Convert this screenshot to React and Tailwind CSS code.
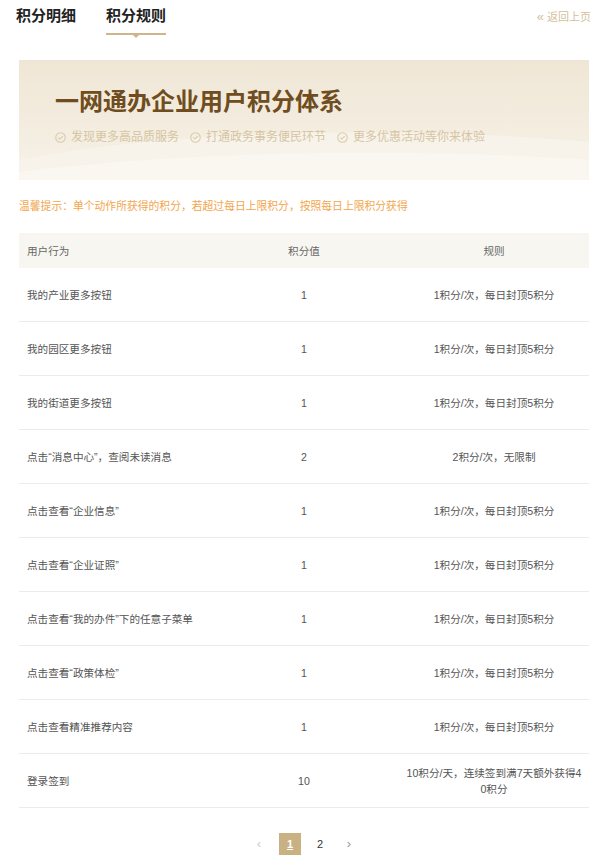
import React from "react";

const rows = [
  ["我的产业更多按钮", "1", "1积分/次，每日封顶5积分"],
  ["我的园区更多按钮", "1", "1积分/次，每日封顶5积分"],
  ["我的街道更多按钮", "1", "1积分/次，每日封顶5积分"],
  ["点击“消息中心”，查阅未读消息", "2", "2积分/次，无限制"],
  ["点击查看“企业信息”", "1", "1积分/次，每日封顶5积分"],
  ["点击查看“企业证照”", "1", "1积分/次，每日封顶5积分"],
  ["点击查看“我的办件”下的任意子菜单", "1", "1积分/次，每日封顶5积分"],
  ["点击查看“政策体检”", "1", "1积分/次，每日封顶5积分"],
  ["点击查看精准推荐内容", "1", "1积分/次，每日封顶5积分"],
  ["登录签到", "10", "10积分/天，连续签到满7天额外获得40积分"],
];

function Check() {
  return (
    <svg width="11" height="11" viewBox="0 0 12 12" fill="none" stroke="#d9c9a8" strokeWidth="1.1">
      <circle cx="6" cy="6" r="5.2" />
      <path d="M3.6 6.1l1.7 1.7 3.1-3.2" />
    </svg>
  );
}

export default function App() {
  return (
    <div className="w-[608px] h-[859px] bg-white overflow-hidden" style={{ fontFamily: '"Liberation Sans", "Noto Sans CJK SC", sans-serif' }}>
      {/* tabs */}
      <div className="flex items-start h-[60px] pl-[16px] pr-[17px]">
        <div className="pt-[5px] text-[15px] font-bold text-[#222] leading-[22px]">积分明细</div>
        <div className="ml-[30px] pt-[5px] flex flex-col items-center">
          <div className="text-[15px] font-bold text-[#222] leading-[22px]">积分规则</div>
          <div className="relative mt-[6px] w-[60px] h-[2px] bg-[#cdb68c]">
            <div className="absolute left-[27px] top-[2px] w-0 h-0 border-l-[3px] border-r-[3px] border-t-[3px] border-l-transparent border-r-transparent border-t-[#cdb68c]" />
          </div>
        </div>
        <div className="ml-auto pt-[9px] flex items-center gap-[3px] text-[11px] text-[#d2bf9b] leading-[16px]">
          <span className="text-[13px]">«</span>
          <span>返回上页</span>
        </div>
      </div>

      {/* banner */}
      <div className="relative mx-[19px] h-[120px] overflow-hidden bg-gradient-to-b from-[#efe6d5] to-[#f7f2e8]">
        <svg className="absolute left-0 bottom-0" width="572" height="60" viewBox="0 0 572 60" preserveAspectRatio="none">
          <path d="M0 40 C150 10 380 5 572 22 L572 60 L0 60Z" fill="#f8f4ec" opacity="0.8" />
          <path d="M0 52 C180 30 400 28 572 40 L572 60 L0 60Z" fill="#faf7f1" opacity="0.9" />
        </svg>
        <div className="relative pl-[36px] pt-[27px]">
          <div className="text-[24px] font-bold text-[#6f4d20] leading-[30px]">一网通办企业用户积分体系</div>
          <div className="mt-[11px] flex items-center text-[12px] text-[#d6c5a2] leading-[18px]">
            <span className="flex items-center gap-[5px]"><Check />发现更多高品质服务</span>
            <span className="ml-[11px] flex items-center gap-[5px]"><Check />打通政务事务便民环节</span>
            <span className="ml-[11px] flex items-center gap-[5px]"><Check />更多优惠活动等你来体验</span>
          </div>
        </div>
      </div>

      {/* tip */}
      <div className="mx-[19px] mt-[18px] text-[10.8px] text-[#f2a64e] leading-[16px]">
        温馨提示：单个动作所获得的积分，若超过每日上限积分，按照每日上限积分获得
      </div>

      {/* table */}
      <div className="mx-[19px] mt-[19px] text-[10.6px] text-[#555] leading-[16px]">
        <div className="grid grid-cols-3 h-[35px] items-center bg-[#f8f6f1] text-[#666]">
          <div className="pl-[8px]">用户行为</div>
          <div className="text-center">积分值</div>
          <div className="text-center">规则</div>
        </div>
        {rows.map((r, i) => (
          <div key={i} className="grid grid-cols-3 h-[54px] items-center border-b border-[#ececec]">
            <div className="pl-[8px] whitespace-nowrap">{r[0]}</div>
            <div className="text-center">{r[1]}</div>
            <div className="text-center px-[6px] break-all">{r[2]}</div>
          </div>
        ))}
      </div>

      {/* pagination */}
      <div className="mt-[25px] flex items-center justify-center text-[11px]">
        <div className="w-[20px] h-[22px] flex items-center justify-center text-[#ccc] text-[13px]">‹</div>
        <div className="ml-[10px] w-[22px] h-[22px] flex items-center justify-center bg-[#c8b283] text-white font-bold underline">1</div>
        <div className="ml-[8px] w-[22px] h-[22px] flex items-center justify-center text-[#333]">2</div>
        <div className="ml-[8px] w-[20px] h-[22px] flex items-center justify-center text-[#999] text-[13px]">›</div>
      </div>
    </div>
  );
}
